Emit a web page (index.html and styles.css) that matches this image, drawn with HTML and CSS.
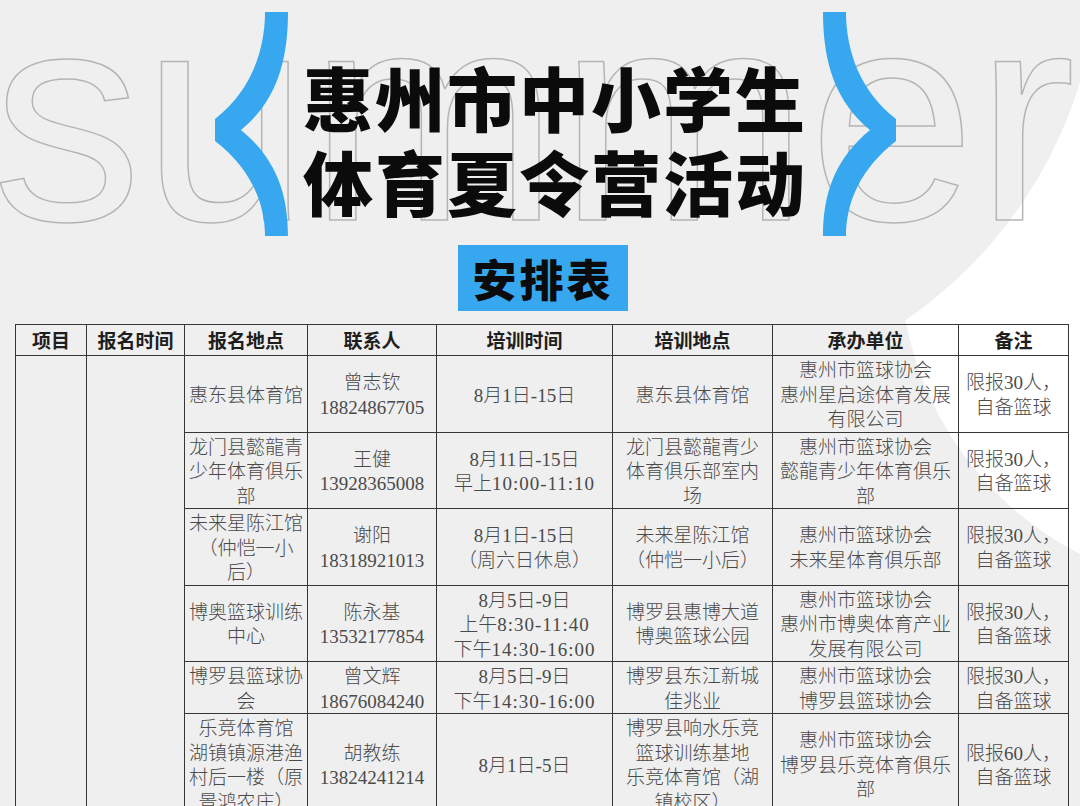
FILE: index.html
```html
<!DOCTYPE html>
<html lang="zh-CN">
<head>
<meta charset="utf-8">
<title>惠州市中小学生体育夏令营活动 安排表</title>
<link rel="stylesheet" href="styles.css">
</head>
<body>
<div class="page">
  <div class="deco-glow"></div>
  <div class="deco-hole"></div>
  <div class="deco-word" aria-hidden="true">summer</div>

  <header class="hero">
    <svg class="brace" viewBox="0 0 73 224" width="73" height="224" aria-hidden="true">
      <path d="M50 0 H73 C73 52 60 90 26 118 C60 146 73 180 73 224 H50 C50 190 35 156 0 129 V107 C35 80 50 40 50 0 Z"/>
    </svg>
    <h1 class="title">惠州市中小学生<br>体育夏令营活动</h1>
    <svg class="brace brace-right" viewBox="0 0 73 224" width="73" height="224" aria-hidden="true">
      <path d="M50 0 H73 C73 52 60 90 26 118 C60 146 73 180 73 224 H50 C50 190 35 156 0 129 V107 C35 80 50 40 50 0 Z"/>
    </svg>
  </header>

  <div class="badge-row"><div class="badge">安排表</div></div>

  <table class="schedule">
    <colgroup>
      <col class="c1"><col class="c2"><col class="c3"><col class="c4">
      <col class="c5"><col class="c6"><col class="c7"><col class="c8">
    </colgroup>
    <thead>
      <tr>
        <th>项目</th><th>报名时间</th><th>报名地点</th><th>联系人</th>
        <th>培训时间</th><th>培训地点</th><th>承办单位</th><th>备注</th>
      </tr>
    </thead>
    <tbody>
      <tr>
        <td rowspan="6"></td><td rowspan="6"></td>
        <td>惠东县体育馆</td>
        <td>曾志钦<br><span class="num">18824867705</span></td>
        <td><span class="num">8</span>月<span class="num">1</span>日<span class="num">-15</span>日</td>
        <td>惠东县体育馆</td>
        <td>惠州市篮球协会<br>惠州星启途体育发展<br>有限公司</td>
        <td>限报<span class="num">30</span>人，<br>自备篮球</td>
      </tr>
      <tr>
        <td>龙门县懿龍青<br>少年体育俱乐<br>部</td>
        <td>王健<br><span class="num">13928365008</span></td>
        <td><span class="num">8</span>月<span class="num">11</span>日<span class="num">-15</span>日<br>早上<span class="num t">10:00-11:10</span></td>
        <td>龙门县懿龍青少<br>体育俱乐部室内<br>场</td>
        <td>惠州市篮球协会<br>懿龍青少年体育俱乐<br>部</td>
        <td>限报<span class="num">30</span>人，<br>自备篮球</td>
      </tr>
      <tr>
        <td>未来星陈江馆<br>（仲恺一小<br>后）</td>
        <td>谢阳<br><span class="num">18318921013</span></td>
        <td><span class="num">8</span>月<span class="num">1</span>日<span class="num">-15</span>日<br>（周六日休息）</td>
        <td>未来星陈江馆<br>（仲恺一小后）</td>
        <td>惠州市篮球协会<br>未来星体育俱乐部</td>
        <td>限报<span class="num">30</span>人，<br>自备篮球</td>
      </tr>
      <tr>
        <td>博奥篮球训练<br>中心</td>
        <td>陈永基<br><span class="num">13532177854</span></td>
        <td><span class="num">8</span>月<span class="num">5</span>日<span class="num">-9</span>日<br>上午<span class="num t">8:30-11:40</span><br>下午<span class="num t">14:30-16:00</span></td>
        <td>博罗县惠博大道<br>博奥篮球公园</td>
        <td>惠州市篮球协会<br>惠州市博奥体育产业<br>发展有限公司</td>
        <td>限报<span class="num">30</span>人，<br>自备篮球</td>
      </tr>
      <tr>
        <td>博罗县篮球协<br>会</td>
        <td>曾文辉<br><span class="num">18676084240</span></td>
        <td><span class="num">8</span>月<span class="num">5</span>日<span class="num">-9</span>日<br>下午<span class="num t">14:30-16:00</span></td>
        <td>博罗县东江新城<br>佳兆业</td>
        <td>惠州市篮球协会<br>博罗县篮球协会</td>
        <td>限报<span class="num">30</span>人，<br>自备篮球</td>
      </tr>
      <tr>
        <td>乐竞体育馆<br>湖镇镇源港渔<br>村后一楼（原<br>景鸿农庄）</td>
        <td>胡教练<br><span class="num">13824241214</span></td>
        <td><span class="num">8</span>月<span class="num">1</span>日<span class="num">-5</span>日</td>
        <td>博罗县响水乐竞<br>篮球训练基地<br>乐竞体育馆（湖<br>镇校区）</td>
        <td>惠州市篮球协会<br>博罗县乐竞体育俱乐<br>部</td>
        <td>限报<span class="num">60</span>人，<br>自备篮球</td>
      </tr>
    </tbody>
  </table>
</div>
</body>
</html>
```

FILE: styles.css
```css
html, body {
  margin: 0;
  padding: 0;
}

body {
  background: #efefef;
  font-family: "Noto Sans CJK SC", "Noto Sans", sans-serif;
}

.page {
  position: relative;
  width: 1080px;
  height: 806px;
  overflow: hidden;
  background: #efefef;
}

/* decorative background shapes */
.deco-glow {
  position: absolute;
  left: 900px;
  top: -70px;
  width: 660px;
  height: 660px;
  border-radius: 50%;
  background: #ffffff;
}

.deco-hole {
  position: absolute;
  left: 200px;
  top: -500px;
  width: 900px;
  height: 900px;
  border-radius: 50%;
  background: #efefef;
}

.deco-word {
  position: absolute;
  left: -8px;
  top: -34px;
  font-family: "Liberation Sans", Arial, sans-serif;
  font-size: 300px;
  line-height: 300px;
  color: transparent;
  -webkit-text-stroke: 1.5px #b4b4b4;
  white-space: nowrap;
}

/* hero */
.hero {
  position: relative;
  display: flex;
  align-items: flex-start;
  padding: 12px 0 0 215px;
}

.brace {
  display: block;
  flex: none;
  fill: #37a8f0;
}

.brace-right {
  transform: scaleX(-1);
  margin-left: 16px;
}

.title {
  margin: 43px 0 0 15px;
  font-family: "Noto Sans CJK SC", sans-serif;
  font-weight: 900;
  font-size: 70px;
  line-height: 84px;
  letter-spacing: 2px;
  color: #0b0b0b;
  white-space: nowrap;
}

/* badge */
.badge-row {
  position: relative;
  display: flex;
  padding-left: 458px;
  margin-top: 9px;
}

.badge {
  width: 170px;
  height: 66px;
  background: #37a8f0;
  color: #0b0b0b;
  font-weight: 900;
  font-size: 44px;
  line-height: 66px;
  letter-spacing: 3px;
  text-align: center;
}

/* table */
.schedule {
  position: relative;
  margin: 13px 0 0 15px;
  border-collapse: collapse;
  table-layout: fixed;
  width: 1054px;
  color: #4a4a4a;
  font-size: 19px;
  line-height: 24.5px;
}

.c1 { width: 71px; }
.c2 { width: 98px; }
.c3 { width: 123px; }
.c4 { width: 129px; }
.c5 { width: 176px; }
.c6 { width: 160px; }
.c7 { width: 186px; }
.c8 { width: 110px; }

.schedule th,
.schedule td {
  border: 1.5px solid #363636;
  padding: 1px;
  text-align: center;
  vertical-align: middle;
  white-space: nowrap;
}

.schedule th {
  height: 28px;
  font-weight: 700;
  line-height: 24px;
  color: #1e1e1e;
}

.schedule td {
  font-weight: 300;
}

.num {
  font-family: "Liberation Serif", "Noto Sans CJK SC", serif;
  font-weight: 300;
  font-size: 19px;
  line-height: 1;
}

.t {
  letter-spacing: 1px;
}
```
